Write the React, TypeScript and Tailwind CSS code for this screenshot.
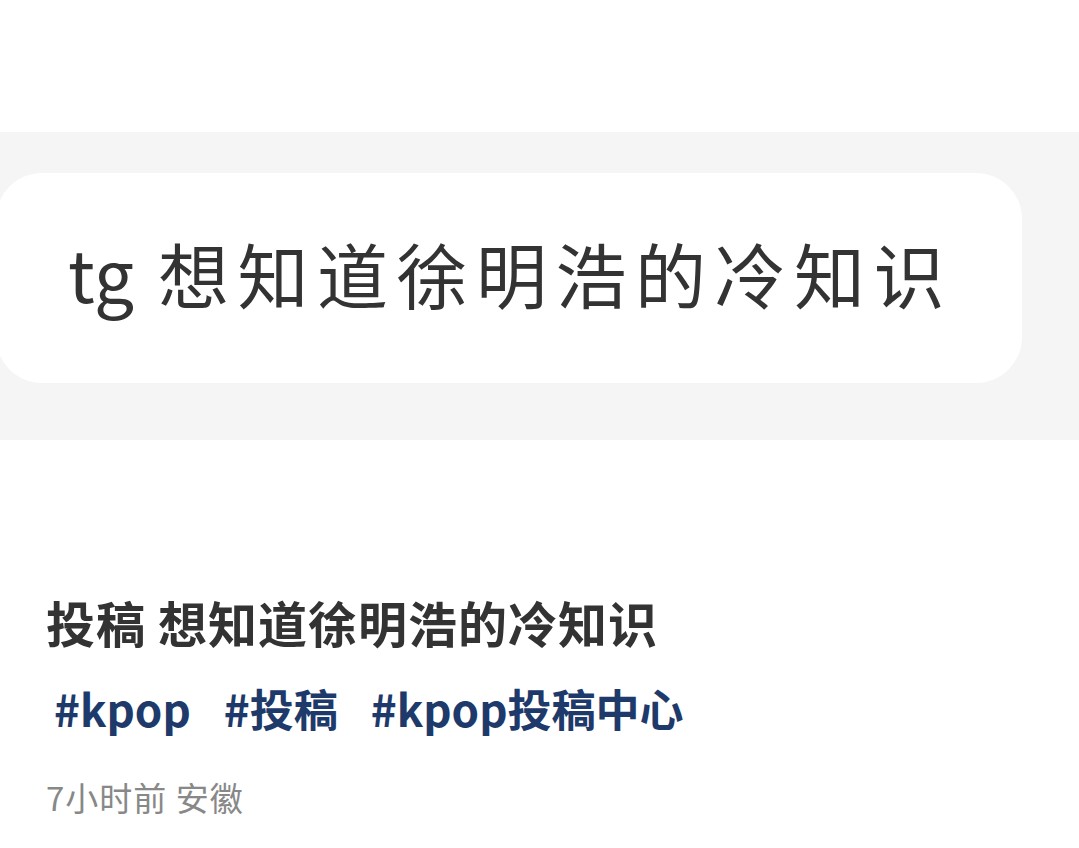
import React from "react";

export default function App() {
  const font = { fontFamily: '"Noto Sans CJK SC", "Noto Sans", sans-serif' };
  return (
    <div className="w-[1079px] h-[848px] bg-white overflow-hidden" style={font}>
      <div className="h-[132px]" />
      <div className="h-[308px] bg-[#f5f5f5] pt-[41px]">
        <div className="ml-[-4px] w-[1026px] h-[210px] bg-white rounded-[46px] flex items-center pl-[72px] pb-[12px]">
          <span className="text-[71px] leading-none text-[#333333] whitespace-nowrap">
            <span>tg</span>
            <span className="ml-[24px] tracking-[8.5px]">想知道徐明浩的冷知识</span>
          </span>
        </div>
      </div>
      <div className="pl-[46px] pt-[157px]">
        <div className="text-[49px] leading-none tracking-[1px] font-bold text-[#333333] whitespace-nowrap">投稿 想知道徐明浩的冷知识</div>
        <div className="mt-[40px] ml-[8px] flex gap-[33px] text-[44px] leading-none font-semibold text-[#1d3a6b] whitespace-nowrap">
          <span>#kpop</span>
          <span>#投稿</span>
          <span>#kpop投稿中心</span>
        </div>
        <div className="mt-[51px] text-[33px] leading-none tracking-[1px] text-[#888888] whitespace-nowrap">7小时前 安徽</div>
      </div>
    </div>
  );
}
